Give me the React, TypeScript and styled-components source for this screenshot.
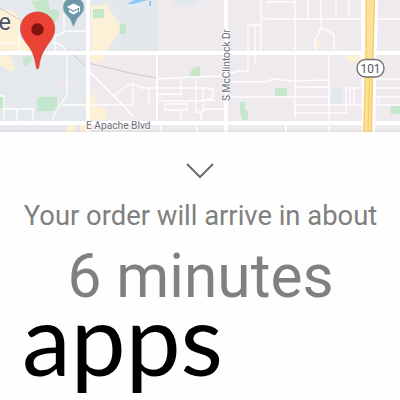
import React from 'react';
import styled, { createGlobalStyle } from 'styled-components';

const GlobalStyle = createGlobalStyle`
  body { margin: 0; background: #fefefe; }
`;

const Screen = styled.main`
  width: 400px;
  height: 400px;
  overflow: hidden;
  display: flex;
  flex-direction: column;
  background: #fefefe;
  font-family: Roboto, sans-serif;
`;

const MapView = styled.section`
  flex: 0 0 132px;
  height: 132px;
  overflow: hidden;
`;

const MapCanvas = styled.svg`
  display: block;
`;

const Sheet = styled.section`
  flex: 1;
  display: flex;
  flex-direction: column;
  align-items: center;
  background: #fefefe;
  color: #808080;
  z-index: 1;
  box-shadow: 0 -1px 2px rgba(0, 0, 0, 0.08);
`;

const Collapse = styled.button`
  margin: 30px 0 0;
  padding: 0;
  border: 0;
  height: 18px;
  background: none;
  color: #6c6c6c;
  svg { display: block; }
`;

const Lead = styled.p`
  margin: 18px 0 0;
  padding-left: 1px;
  font-size: 27.4px;
  line-height: 36px;
  white-space: nowrap;
`;

const Estimate = styled.p`
  margin: 16px 0 0;
  padding-left: 1px;
  font-size: 60.4px;
  line-height: 54px;
  white-space: nowrap;
`;

const Caption = styled.p`
  align-self: flex-start;
  margin: 0 0 0 22px;
  color: #000;
  font: 400 98px/68px Lato, sans-serif;
  white-space: nowrap;
`;

const StreetMap = () => (
  <MapCanvas width="400" height="132" viewBox="0 0 400 132">
    <rect width="400" height="132" fill="#eeeaee" />
    <path d="M0 0H88V132H0Z" fill="#e5e8ed" />
    <path d="M88 0H157V52H88Z M173 0H199L191 7L176 5Z M331 88H341V104H331Z" fill="#e3e8ec" />
    <path d="M58 81l6-4 3 3v6l-4 2-4-3z" fill="#eee6ea" />

    <g fill="#fcf0d7">
      <path d="M0 10H12L25 23H20V52H0Z" />
      <path d="M0 54L12 57 15 70 10 72 5 67 0 66Z M20 40H35V53H20Z" />
      <path d="M91 6L108 4 111 12 120 23 119 33 111 44 106 53 104 63 91 62Z" />
      <path d="M67 123H76V132H65Z M86 96L95 94 96 106 107 109V120H86Z M80 124H90V132H80Z" />
      <path d="M347 55H361V62H347Z M316 40l4 3v6h-4z" />
    </g>
    <g fill="#c4e6cb">
      <path d="M31 1L48 0 50 10 58 9 59 17 53 25 38 13Z M22 57L32 56 31 62 25 67Z" />
      <path d="M93 9H104V18H93Z M120 24H126V34H120Z M37 97H57V111H37Z M0 97H4V108H0Z" />
      <path d="M190 72L194 68 200 66V76H190Z M240 102H245V110H248V120H242L240 112Z" />
      <path d="M275 88H287V96H275Z M391 106H400V114H391Z" />
    </g>
    <path d="M127 4L134 0H148L137 3 133 4Z M149 1H151V6H149Z" fill="#8bcaf8" />

    <g fill="none" stroke="#c9c9cd" strokeWidth="1">
      <path d="M0 8L30 26M67 50L88 68" />
      <path d="M88 63L130 73 157 78" />
    </g>

    <g fill="none" stroke="#fff" strokeWidth="1.4" strokeOpacity=".9">
      <path d="M0 43H19M19 24V53M55 53V35H59L65 31H88M52 42C58 43 66 46 67 54V92C67 102 53 108 53 120" />
      <path d="M64 29V0M62 105H88M0 96H4V120M4 109H33V122M17 110V122" />
      <path d="M114 96L126 86 133 84M88 105H133M133 84V105M157 52V120M157 79L190 77 226 76" />
      <path d="M133 83L141 88H207M149 88V104M181 79V94H157M196 79V112H203V104M203 88V100H215M165 104V110H187V103M165 104H187M157 101H204L213 97V89H207M204 109H226M181 111V120M201 112V120" />
      <path d="M226 74L239 71H248V25H261M261 0V51M255 25V64M261 18H266M226 82H266M226 97H294" />
      <path d="M266 2H295M266 19H400M295 0V118M308 0V18M321 0V28M336 0V18M349 0V18M321 28L334 34V51M321 28L315 40V51" />
      <path d="M266 81L275 79 290 81 329 80M329 54V132M295 87H329M295 97H329M295 105H400M295 113H346V88H400M350 89V104M354 89V104M376 79H400M376 97H400M379 97V104M286 124V132" />
    </g>
    <g fill="none" stroke="#fff">
      <path d="M88 0V132M226 0V132" strokeWidth="3.8" />
      <path d="M0 53H400M0 123H400" strokeWidth="3.8" />
      <path d="M88 70L117 99 133 116M157 53V123" strokeWidth="1.6" />
      <path d="M161 126V132M286 125V132M197 126V132" strokeWidth="1.6" />
    </g>
    <path d="M361 0H378L375 132H362Z" fill="#fff" />
    <path d="M366 0H375L372 132H363Z" fill="#fde19a" />
    <path d="M366 0L366 60 364 132M374.5 0L372.5 60 371.5 132M370 60L368 132" fill="none" stroke="#f5ca60" strokeWidth="1" />

    <rect x="357" y="59.5" width="27" height="17.5" rx="8.5" fill="#fff" stroke="#737373" strokeWidth="1.4" />
    <g fontFamily="Roboto, sans-serif">
      <text x="370.5" y="73" fill="#555" fontSize="12.8" textAnchor="middle" textLength="20" lengthAdjust="spacingAndGlyphs">101</text>
      <g fill="#6b7078" stroke="#fff" strokeOpacity=".7" strokeWidth="1.5" strokeLinejoin="round" paintOrder="stroke">
        <text x="86" y="129" fontSize="11" textLength="64.5" lengthAdjust="spacingAndGlyphs">E Apache Blvd</text>
        <text transform="translate(230.2 101) rotate(-90)" fontSize="11" textLength="72" lengthAdjust="spacingAndGlyphs">S McClintock Dr</text>
        <text x="-1.5" y="29.5" fill="#4e535d" fontSize="23.5">e</text>
      </g>
    </g>

    <path d="M63 7.5C63 -6 84 -6 84 7.5C84 13 80 15 77 19L74 26Q73.5 27 73 26L70 19C67 15 63 13 63 7.5Z" fill="#6d98a8" stroke="#b9cbd2" strokeWidth=".7" />
    <path d="M66.8 7L73.5 3.5 80.5 7 73.5 10.5ZM69 9.5L73.5 12 78 9.5V12L73.5 14.5 69 12Z M79 7H80V12H79Z" fill="#fff" />
    <path d="M37.5 12C27.8 12 20.5 19.4 20.5 28.5C20.5 36 25 41 28.5 46C33.5 53 35 59 36.2 66.5Q36.5 69 37.5 69Q38.6 69 39 66.5C40.2 58 42 53 46.5 46.5C50.5 40.5 54.7 36 54.7 28.5C54.7 19.4 47.2 12 37.5 12Z" fill="#ea4335" stroke="#cb3b35" strokeWidth=".6" />
    <circle cx="37.5" cy="29.4" r="6.2" fill="#811411" />
  </MapCanvas>
);

export default function App() {
  return (
    <>
      <GlobalStyle />
      <Screen>
        <MapView><StreetMap /></MapView>
        <Sheet>
          <Collapse aria-label="Collapse">
            <svg width="30" height="18" viewBox="0 0 30 18">
              <path d="M2 2L15 15L28 2" fill="none" stroke="currentColor" strokeWidth="2" />
            </svg>
          </Collapse>
          <Lead>Your order will arrive in about</Lead>
          <Estimate>6 minutes</Estimate>
          <Caption>apps</Caption>
        </Sheet>
      </Screen>
    </>
  );
}
